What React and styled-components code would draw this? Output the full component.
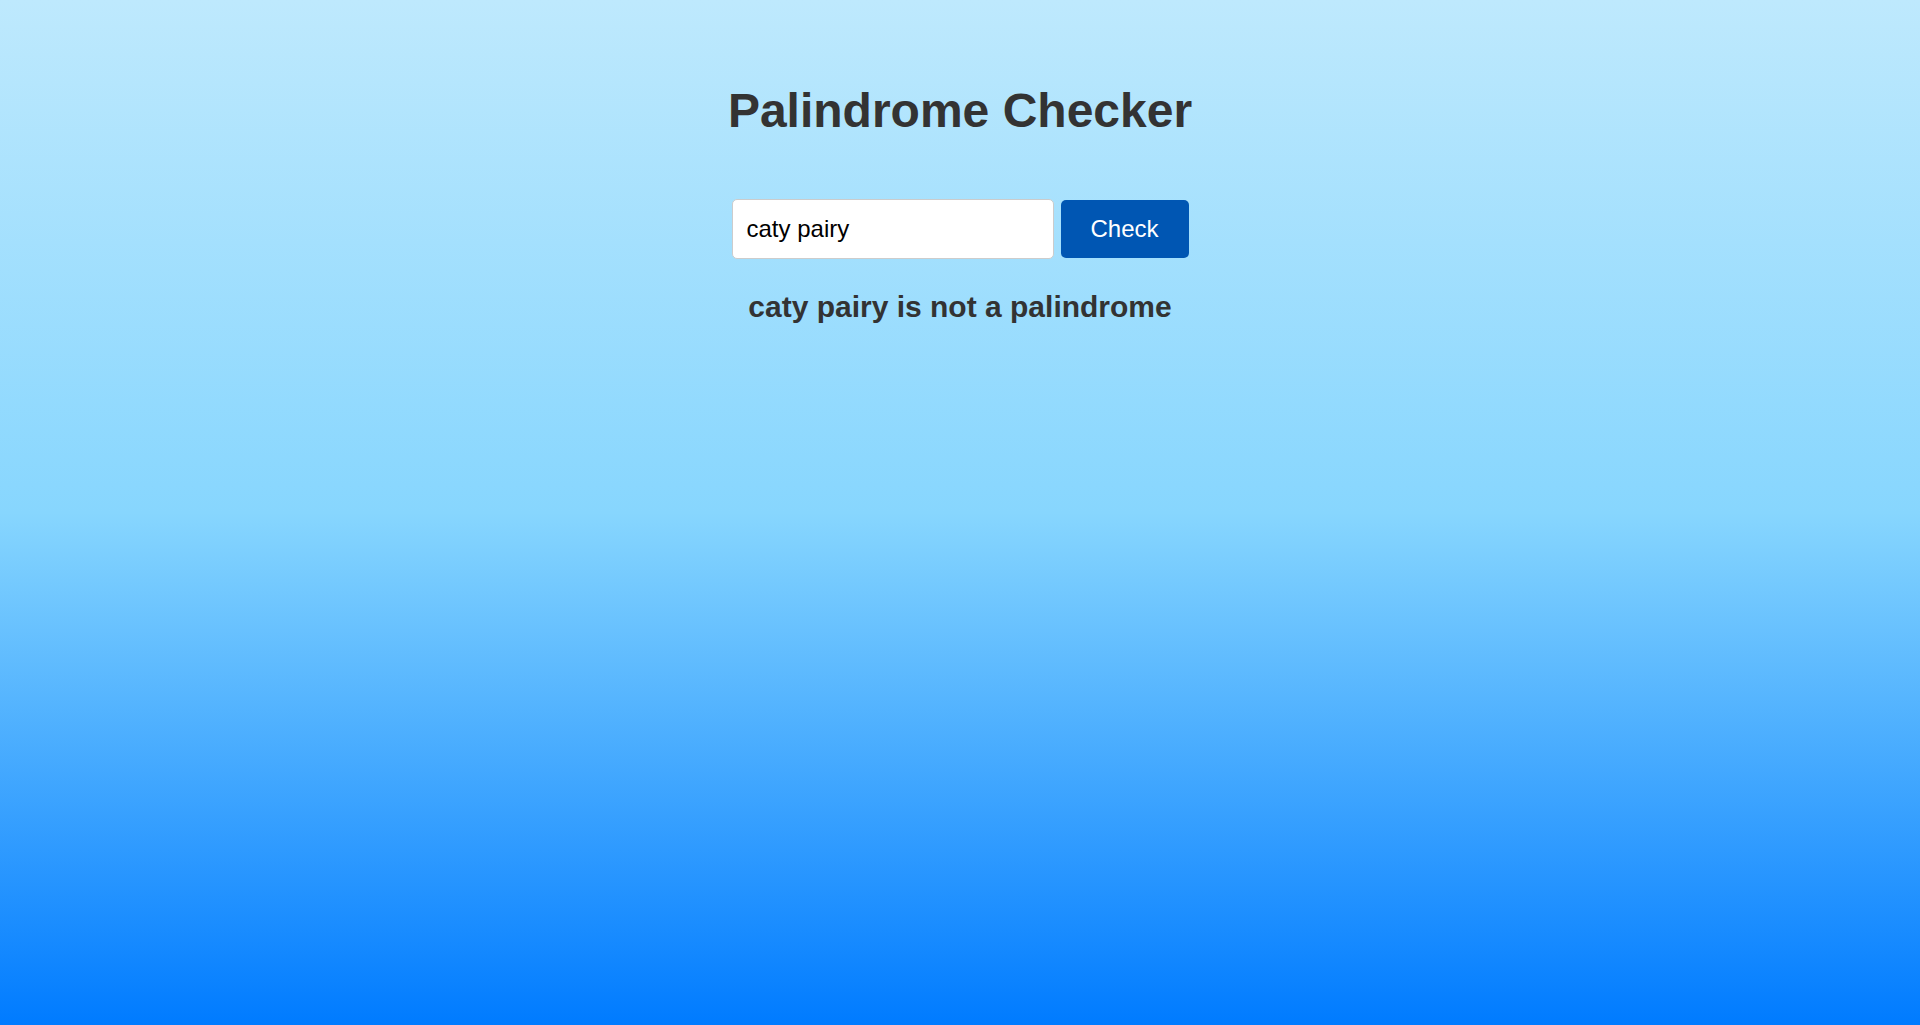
import React, { useState } from "react";
import styled, { createGlobalStyle } from "styled-components";

const GlobalStyle = createGlobalStyle`
  html, body {
    margin: 0;
    padding: 0;
  }
  body {
    font-family: "Liberation Sans", Arial, sans-serif;
    color: #333;
  }
`;

const Page = styled.div`
  min-height: 100vh;
  display: flex;
  flex-direction: column;
  align-items: center;
  padding-top: 83px;
  box-sizing: border-box;
  background: linear-gradient(to bottom, #bee9fd 0%, #87d6fe 50%, #007bff 100%);
`;

const Title = styled.h1`
  margin: 0;
  font-size: 48px;
  font-weight: bold;
  color: #333;
`;

const Form = styled.form`
  display: flex;
  align-items: center;
  gap: 7px;
  margin-top: 61px;
`;

const Input = styled.input`
  box-sizing: border-box;
  width: 322px;
  height: 60px;
  padding: 0 14px;
  font-family: "Liberation Sans", Arial, sans-serif;
  font-size: 24px;
  color: #000;
  background: #fff;
  border: 1px solid #ccc;
  border-radius: 5px;
  outline: none;
`;

const Button = styled.button`
  box-sizing: border-box;
  width: 128px;
  height: 58px;
  font-family: "Liberation Sans", Arial, sans-serif;
  font-size: 24px;
  color: #fff;
  background: #0056b3;
  border: none;
  border-radius: 5px;
  cursor: pointer;
`;

const Result = styled.p`
  margin: 31px 0 0;
  font-size: 30px;
  font-weight: bold;
  color: #333;
`;

const isPalindrome = (s) => {
  const clean = s.toLowerCase().replace(/[^a-z0-9]/g, "");
  return clean.length > 0 && clean === clean.split("").reverse().join("");
};

const App = () => {
  const [text, setText] = useState("caty pairy");
  const [result, setResult] = useState("caty pairy is not a palindrome");

  const check = (e) => {
    e.preventDefault();
    setResult(`${text} is ${isPalindrome(text) ? "" : "not "}a palindrome`);
  };

  return (
    <>
      <GlobalStyle />
      <Page>
        <Title>Palindrome Checker</Title>
        <Form onSubmit={check}>
          <Input value={text} onChange={(e) => setText(e.target.value)} />
          <Button type="submit">Check</Button>
        </Form>
        <Result>{result}</Result>
      </Page>
    </>
  );
};

export default App;
